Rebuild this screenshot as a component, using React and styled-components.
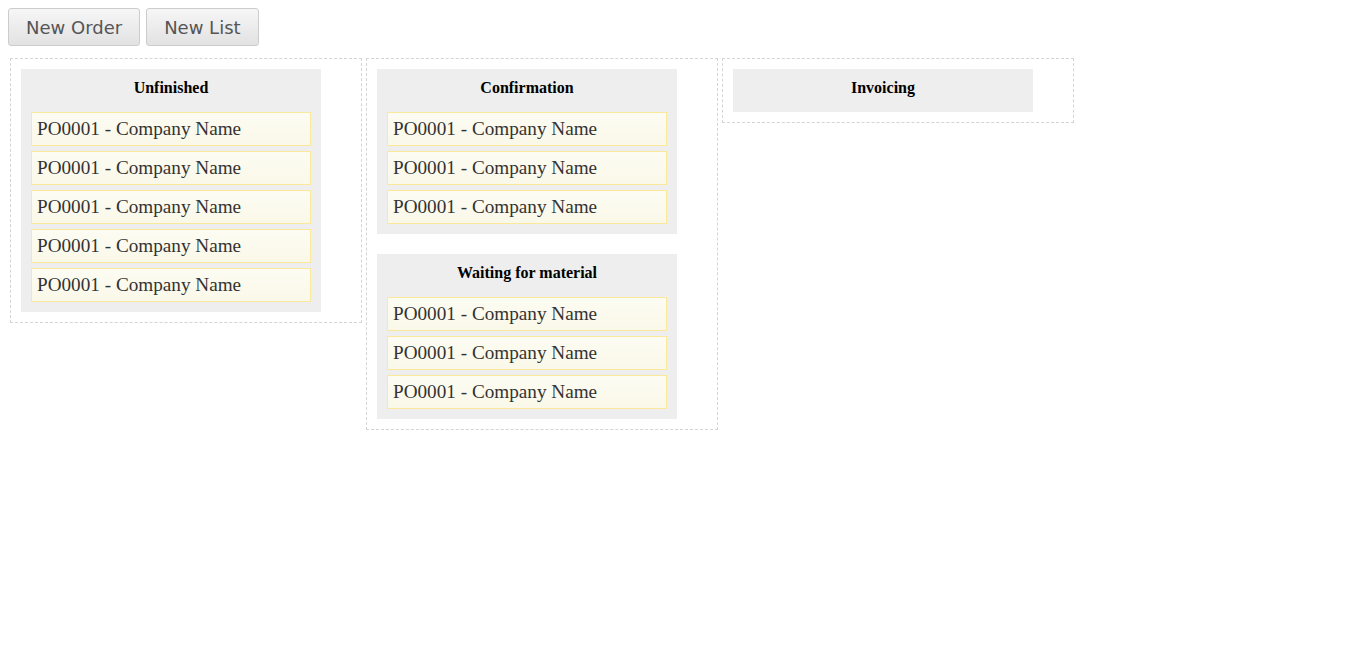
import React from "react";
import styled, { createGlobalStyle } from "styled-components";

const Global = createGlobalStyle`
  body { margin: 8px; background: #fff; font-family: "Liberation Serif", "Times New Roman", serif; }
`;

const Toolbar = styled.div`
  display: flex;
  gap: 6px;
  margin-bottom: 12px;
`;

const Button = styled.button`
  height: 38px;
  padding: 0 17px;
  font-family: "DejaVu Sans", Verdana, sans-serif;
  font-size: 18px;
  color: #555;
  background: linear-gradient(#f6f6f6, #e2e2e2);
  border: 1px solid #ccc;
  border-radius: 3px;
  cursor: pointer;
`;

const Board = styled.div`
  display: flex;
  align-items: flex-start;
  gap: 4px;
  margin-left: 2px;
`;

const Column = styled.div`
  width: 330px;
  padding: 10px;
  border: 1px dashed #d4d4d4;
  display: flex;
  flex-direction: column;
  gap: 20px;
`;

const List = styled.div`
  width: 280px;
  background: #eeeeee;
  padding: 10px 10px 0;
`;

const Title = styled.h3`
  margin: 0 0 15px;
  font-size: 16px;
  line-height: 18px;
  font-weight: bold;
  text-align: center;
  color: #000;
`;

const Cards = styled.div`
  display: flex;
  flex-direction: column;
  gap: 5px;
  padding-bottom: 10px;
  &:empty { display: none; }
`;

const Card = styled.div`
  height: 32px;
  border: 1px solid #fbe89a;
  background: linear-gradient(#fdfcf3, #faf8e8);
  padding: 0 5px;
  font-size: 19.2px;
  line-height: 32px;
  color: #333;
`;

const columns = [
  [{ title: "Unfinished", n: 5 }],
  [
    { title: "Confirmation", n: 3 },
    { title: "Waiting for material", n: 3 },
  ],
  [{ title: "Invoicing", n: 0 }],
];

export default function App() {
  return (
    <>
      <Global />
      <Toolbar>
        <Button>New Order</Button>
        <Button>New List</Button>
      </Toolbar>
      <Board>
        {columns.map((lists, i) => (
          <Column key={i}>
            {lists.map((l) => (
              <List key={l.title}>
                <Title>{l.title}</Title>
                <Cards>
                  {Array.from({ length: l.n }).map((_, k) => (
                    <Card key={k}>PO0001 - Company Name</Card>
                  ))}
                </Cards>
              </List>
            ))}
          </Column>
        ))}
      </Board>
    </>
  );
}
